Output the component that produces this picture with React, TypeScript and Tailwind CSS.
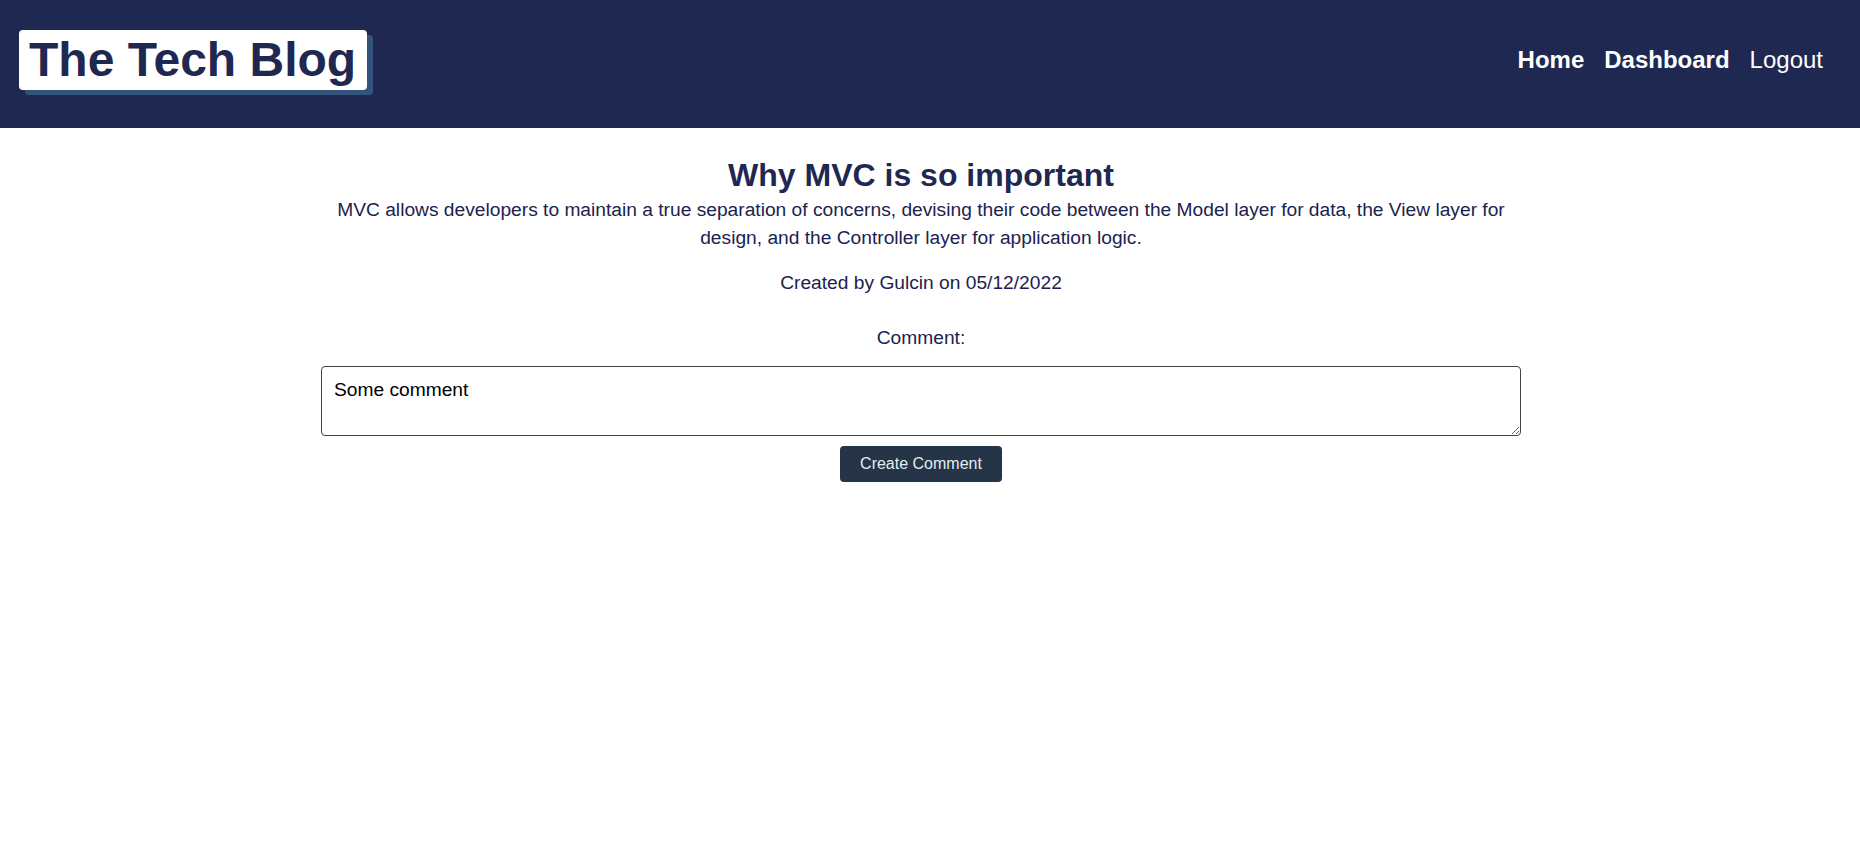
export default function App() {
  return (
    <div className="min-h-screen bg-white font-['Liberation_Sans',Arial,sans-serif]">
      <header className="flex h-[128px] items-start justify-between bg-[#1f2850] pl-[19px] pr-[37px] pt-[30px]">
        <div className="flex h-[60px] items-center rounded-[4px] bg-white pl-[10px] pr-[11px] shadow-[6px_5px_0_#34537a]">
          <h1 className="text-[48px] font-bold leading-none text-[#1f2850]">
            The Tech Blog
          </h1>
        </div>
        <nav className="mt-[12px] flex items-center gap-[20px] text-[24px] text-white">
          <a className="font-bold">Home</a>
          <a className="font-bold">Dashboard</a>
          <a>Logout</a>
        </nav>
      </header>

      <main className="flex flex-col items-center pr-[18px] text-center">
        <h2 className="mt-[28px] text-[32px] font-bold leading-[1.2] text-[#1f2850]">
          Why MVC is so important
        </h2>
        <p className="mt-[2px] w-[1200px] text-[19.2px] leading-[28px] text-[#1c2250]">
          MVC allows developers to maintain a true separation of concerns, devising their code between the Model layer for data, the View layer for design, and the Controller layer for application logic.
        </p>
        <p className="mt-[17px] text-[19.2px] leading-[28px] text-[#1c2250]">
          Created by Gulcin on 05/12/2022
        </p>

        <label className="mt-[27px] text-[19.2px] leading-[28px] text-[#1c2250]">
          Comment:
        </label>
        <textarea
          className="mt-[14px] h-[70px] w-[1200px] rounded-[4px] border border-[#444] px-[12px] py-[12px] text-[19.2px] leading-[1.15] text-black"
          defaultValue="Some comment"
        />
        <button className="mt-[10px] h-[36px] rounded-[4px] bg-[#253447] px-[20px] text-[16px] text-[#e3eef0]">
          Create Comment
        </button>
      </main>
    </div>
  );
}
